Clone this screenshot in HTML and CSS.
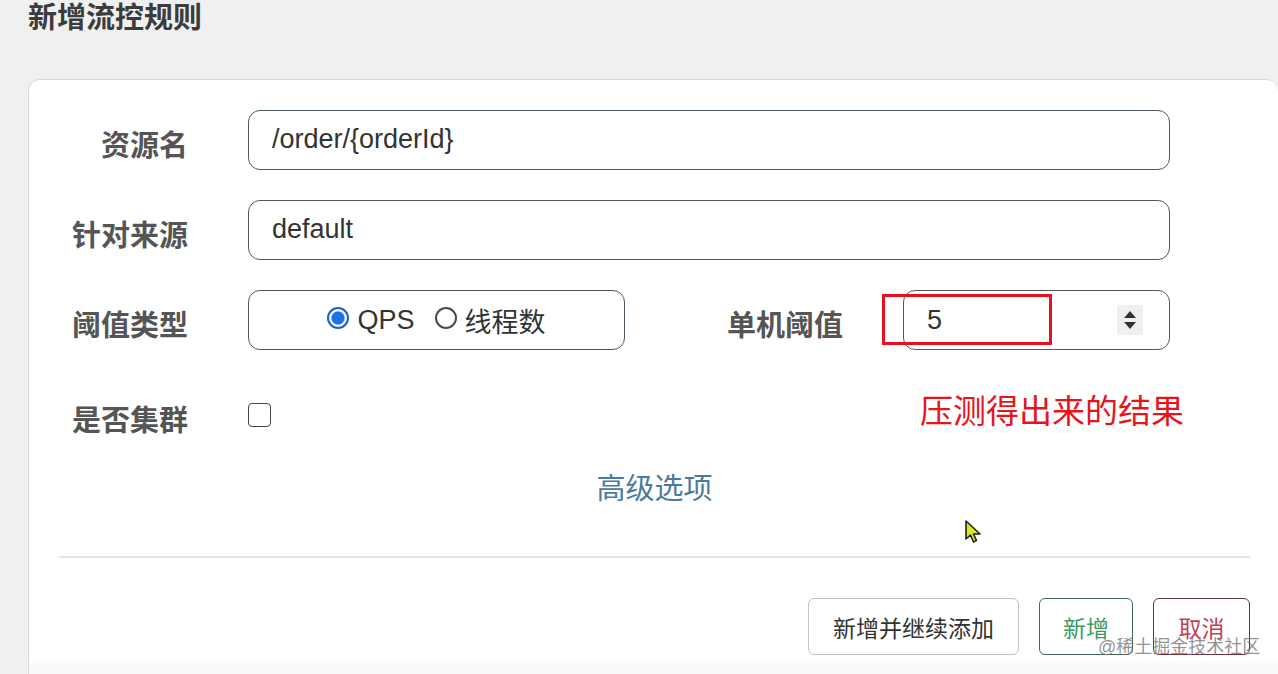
FILE: index.html
```html
<!DOCTYPE html>
<html lang="zh-CN">
<head>
    <meta charset="UTF-8">
    <meta name="viewport" content="width=device-width, initial-scale=1.0">
    <title>新增流控规则</title>
    <link rel="stylesheet" href="styles.css">
</head>
<body>
    <h1 class="modal-title">新增流控规则</h1>
    <div class="modal-card">
        <form class="rule-form">
            <div class="form-row">
                <label class="form-label">资源名</label>
                <input class="text-input wide" type="text" value="/order/{orderId}">
            </div>
            <div class="form-row">
                <label class="form-label">针对来源</label>
                <input class="text-input wide" type="text" value="default">
            </div>
            <div class="form-row">
                <label class="form-label">阈值类型</label>
                <div class="radio-box">
                    <label class="radio-item"><input type="radio" name="grade" checked> QPS</label>
                    <label class="radio-item"><input type="radio" name="grade"> 线程数</label>
                </div>
                <label class="form-label second">单机阈值</label>
                <div class="number-input">
                    <span class="number-value">5</span>
                    <span class="spinner">
                        <svg width="14" height="22" viewBox="0 0 14 22"><path d="M7 2 L13 9 H1 Z M1 13 H13 L7 20 Z" fill="#333"/></svg>
                    </span>
                    <!-- 标注框 -->
                    <span class="mark-box"></span>
                </div>
            </div>
            <div class="form-row cluster-row">
                <label class="form-label">是否集群</label>
                <input class="check" type="checkbox">
                <span class="note-red">压测得出来的结果</span>
            </div>
            <div class="advanced"><a href="#">高级选项</a></div>
        </form>
        <div class="divider"></div>
        <div class="btn-row">
            <button type="button" class="btn btn-default">新增并继续添加</button>
            <button type="button" class="btn btn-ok">新增</button>
            <button type="button" class="btn btn-cancel">取消</button>
        </div>
        <div class="card-bottom"></div>
    </div>

    <svg class="cursor" width="20" height="26" viewBox="0 0 20 26">
        <path d="M2 2 L2 20 L6.5 16 L9.5 23 L12.5 21.6 L9.6 15 L16 15 Z" fill="#d8e82a" stroke="#222" stroke-width="1.6" stroke-linejoin="round"/>
    </svg>
    <div class="watermark">@稀土掘金技术社区</div>
</body>
</html>
```

FILE: styles.css
```css
body {
    margin: 0;
    background-color: #f0f0f0;
    font-family: "Liberation Sans", "Noto Sans CJK SC", sans-serif;
    overflow: hidden;
    height: 674px;
    position: relative;
}
.modal-title {
    margin: 0;
    padding: 0 28px;
    font-size: 29px;
    line-height: 36px;
    font-weight: bold;
    color: #3c3c3c;
}
.modal-card {
    margin: 43px 0 0 28px;
    width: 1250px;
    height: 620px;
    box-sizing: border-box;
    padding: 30px 28px 0 30px;
    background-color: #fff;
    border: 1px solid #d9d9d9;
    border-right: none;
    border-radius: 12px 12px 0 0;
}
.form-row {
    display: flex;
    align-items: center;
    height: 60px;
    margin-bottom: 30px;
}
.form-label {
    width: 129px;
    margin-right: 60px;
    padding-top: 6px;
    text-align: right;
    font-size: 29px;
    font-weight: bold;
    color: #555;
    flex-shrink: 0;
}
.form-label.second {
    width: 218px;
}
.text-input {
    height: 60px;
    box-sizing: border-box;
    padding: 0 0 1px 23px;
    border: 1.5px solid #4b5a62;
    border-radius: 12px;
    font-family: "Liberation Sans", "Noto Sans CJK SC", sans-serif;
    font-size: 27px;
    color: #333;
    background: #fff;
    outline: none;
}
.text-input.wide {
    width: 922px;
}
.radio-box {
    width: 377px;
    height: 60px;
    box-sizing: border-box;
    border: 1.5px solid #4b5a62;
    border-radius: 12px;
    display: flex;
    align-items: center;
    justify-content: center;
    gap: 20px;
    padding-left: 0;
}
.radio-item {
    display: flex;
    align-items: center;
    gap: 8px;
    font-size: 27px;
    color: #333;
}
.radio-item input {
    appearance: none;
    margin: 0 0 4px 0;
    width: 22px;
    height: 22px;
    box-sizing: border-box;
    border: 2px solid #4a4a4a;
    border-radius: 50%;
    background: #fff;
}
.radio-item input:checked {
    border: 2px solid #1c5fc4;
    background: radial-gradient(circle, #1a73e8 0, #1a73e8 6px, #e6f0ff 7px, #fff 8px);
}
.number-input {
    position: relative;
    width: 267px;
    height: 60px;
    box-sizing: border-box;
    border: 1.5px solid #4b5a62;
    border-radius: 12px;
    display: flex;
    align-items: center;
    padding: 0 26px 0 23px;
    font-size: 27px;
    color: #333;
}
.spinner {
    margin-left: auto;
    width: 26px;
    height: 30px;
    background-color: #f0f0f0;
    display: flex;
    align-items: center;
    justify-content: center;
}
.mark-box {
    position: absolute;
    left: -22px;
    top: 3px;
    width: 170px;
    height: 51px;
    box-sizing: border-box;
    border: 3px solid #e8101a;
}
.cluster-row {
    height: 70px;
    margin-bottom: 19px;
}
.check {
    appearance: none;
    margin: 0;
    width: 23px;
    height: 24px;
    box-sizing: border-box;
    border: 1.5px solid #444;
    border-radius: 4px;
    background: #fff;
}
.note-red {
    margin-left: auto;
    margin-right: 66px;
    padding-bottom: 12px;
    font-size: 33px;
    color: #e8141b;
}
.advanced {
    text-align: center;
    line-height: 40px;
    height: 40px;
    font-size: 29px;
}
.advanced a {
    color: #4a7aa0;
    text-decoration: none;
}
.divider {
    margin-top: 47px;
    height: 2px;
    background-color: #e3e3e3;
}
.btn-row {
    display: flex;
    justify-content: flex-end;
    gap: 20px;
    margin-top: 40px;
}
.btn {
    height: 57px;
    padding: 0;
    background-color: #fff;
    border-radius: 6px;
    font-family: "Liberation Sans", "Noto Sans CJK SC", sans-serif;
    font-size: 23px;
    cursor: pointer;
}
.btn-default {
    width: 211px;
    border: 1px solid #c4c4c4;
    color: #333;
}
.btn-ok {
    width: 94px;
    border: 1.5px solid #3f6b58;
    color: #3c9a5f;
}
.btn-cancel {
    width: 97px;
    border: 1.5px solid #6b3040;
    color: #c2405a;
}
.card-bottom {
    margin: 6px -28px 0 -30px;
    height: 20px;
    background: linear-gradient(#fcfcfc, #f6f6f6);
}
.cursor {
    position: absolute;
    left: 964px;
    top: 519px;
}
.watermark {
    position: absolute;
    left: 1098px;
    top: 632px;
    font-size: 18px;
    color: rgba(110, 110, 110, 0.75);
    white-space: nowrap;
}
```
